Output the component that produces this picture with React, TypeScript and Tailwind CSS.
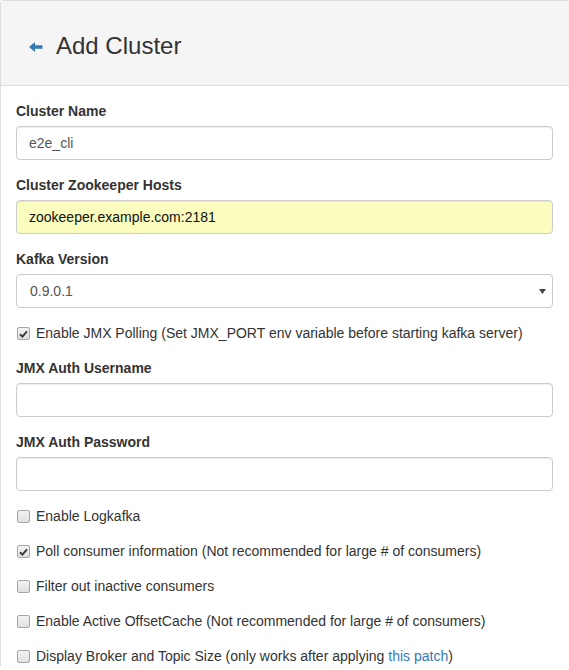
import { useState } from "react";

type Check = {
  id: string;
  label: React.ReactNode;
  checked: boolean;
};

const font = "font-['Liberation_Sans',Arial,sans-serif]";

const Field = ({ label, children }: { label: string; children: React.ReactNode }) => (
  <div className="mb-[15px]">
    <label className="mb-[5px] block text-[14px] font-bold leading-5 text-[#333]">{label}</label>
    {children}
  </div>
);

const TextInput = ({ value, autofill }: { value?: string; autofill?: boolean }) => (
  <div
    className={`flex h-[34px] items-center rounded-[4px] border border-[#ccc] px-3 text-[14px] shadow-[inset_0_1px_1px_rgba(0,0,0,0.075)] ${
      autofill ? "bg-[#fafdbd] text-[#111]" : "bg-white text-[#555]"
    }`}
  >
    {value}
  </div>
);

const CheckBox = ({ checked }: { checked: boolean }) => (
  <span className="mt-[4px] ml-px flex h-[13px] w-[13px] shrink-0 items-center justify-center rounded-[2px] border border-[#a6a6a6] bg-[linear-gradient(#f2f2f2,#e1e1e1)]">
    {checked && (
      <svg width="9" height="8" viewBox="0 0 9 8">
        <path d="M1 4.2 L3.4 6.6 L8 1.4" stroke="#3b3b3b" strokeWidth="2" fill="none" />
      </svg>
    )}
  </span>
);

export default function App() {
  const [checks] = useState<Check[]>([
    { id: "logkafka", label: "Enable Logkafka", checked: false },
    {
      id: "poll",
      label: "Poll consumer information (Not recommended for large # of consumers)",
      checked: true,
    },
    { id: "filter", label: "Filter out inactive consumers", checked: false },
    {
      id: "offset",
      label: "Enable Active OffsetCache (Not recommended for large # of consumers)",
      checked: false,
    },
    {
      id: "size",
      label: (
        <>
          Display Broker and Topic Size (only works after applying{" "}
          <a className="text-[#337ab7]">this patch</a>)
        </>
      ),
      checked: false,
    },
  ]);

  return (
    <div className={`min-h-[670px] bg-white ${font}`}>
      <div className="rounded-tl-[4px] border-t border-l border-[#ddd]">
        {/* Heading */}
        <div className="h-[85px] border-b border-[#ddd] bg-[#f5f5f5] pt-[32px] pl-[28px]">
          <h3 className="flex items-center text-[24px] leading-[1.1] font-normal text-[#333]">
            <svg width="14" height="10" viewBox="0 0 14 10" className="mt-[2px] mr-[13px]">
              <path d="M0 5 L6 0 L6 3.3 L13.5 3.3 L13.5 6.7 L6 6.7 L6 10 Z" fill="#337ab7" />
            </svg>
            Add Cluster
          </h3>
        </div>

        {/* Body */}
        <div className="pt-[15px] pr-4 pl-[15px] text-[14px] leading-5 text-[#333]">
          <Field label="Cluster Name">
            <TextInput value="e2e_cli" />
          </Field>
          <Field label="Cluster Zookeeper Hosts">
            <TextInput value="zookeeper.example.com:2181" autofill />
          </Field>
          <Field label="Kafka Version">
            <div className="relative flex h-[34px] items-center rounded-[4px] border border-[#ccc] bg-white pl-[13px] text-[#555]">
              0.9.0.1
              <svg
                width="7"
                height="5"
                viewBox="0 0 7 5"
                className="absolute top-[14px] right-[6px]"
              >
                <path d="M0 0 L7 0 L3.5 5 Z" fill="#444" />
              </svg>
            </div>
          </Field>

          <div className="mb-[15px] flex gap-[6px] leading-5">
            <CheckBox checked />
            <span>Enable JMX Polling (Set JMX_PORT env variable before starting kafka server)</span>
          </div>

          <Field label="JMX Auth Username">
            <TextInput />
          </Field>
          <Field label="JMX Auth Password">
            <TextInput />
          </Field>

          {checks.map((c) => (
            <div key={c.id} className="mb-[15px] flex gap-[6px] leading-5">
              <CheckBox checked={c.checked} />
              <span>{c.label}</span>
            </div>
          ))}
        </div>
      </div>
    </div>
  );
}
